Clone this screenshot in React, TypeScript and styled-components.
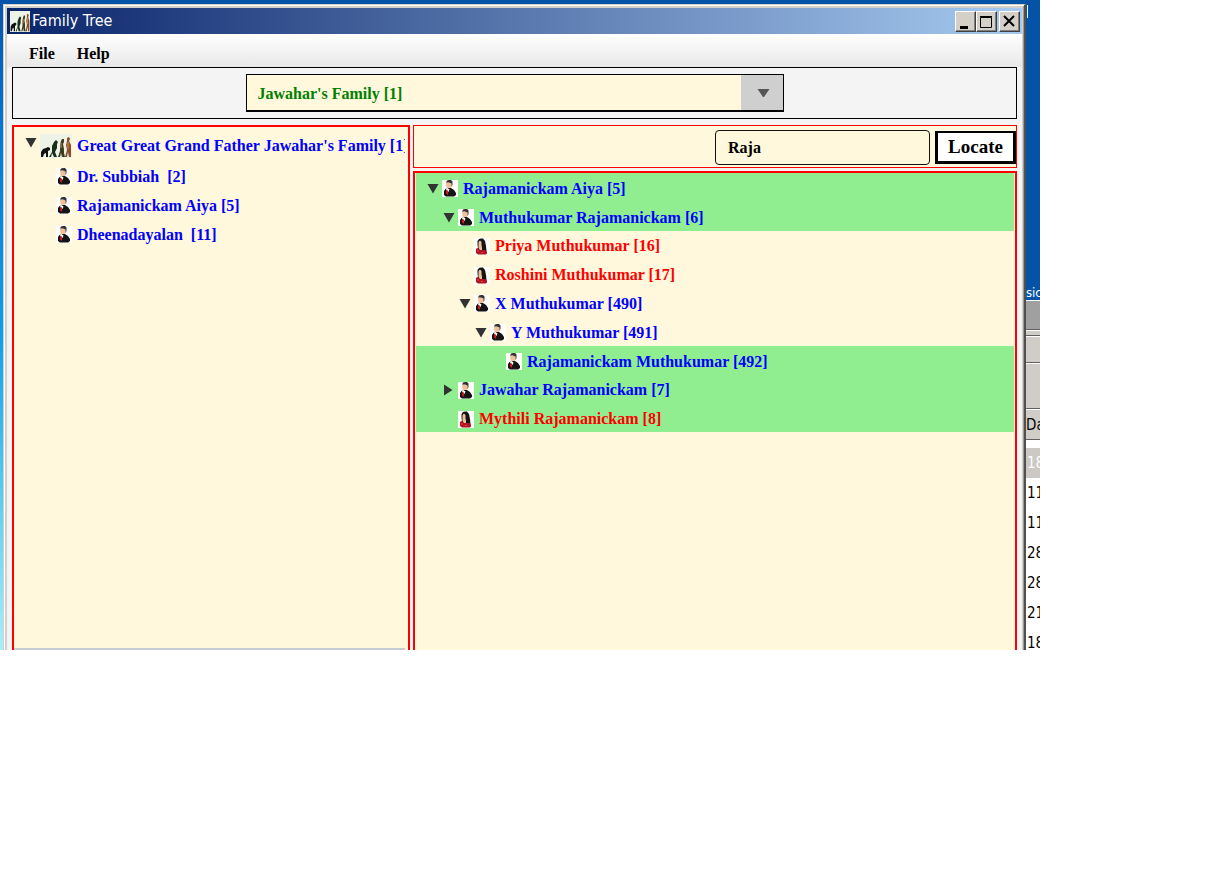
import React, { useState } from "react";
import styled, { createGlobalStyle } from "styled-components";

const serif = '"Liberation Serif", "Times New Roman", serif';
const sans = '"DejaVu Sans Condensed", Tahoma, sans-serif';
const cream = "#fff8dc";
const match = "#90ee90";

const GlobalStyle = createGlobalStyle`
  * { box-sizing: border-box; }
  body { margin: 0; background: #fff; font-family: ${serif}; }
  button, input, select { margin: 0; font-family: inherit; }
  svg { flex: none; }
`;

const Page = styled.div`
  min-height: 100vh;
  display: flex;
  padding: 0 166px 220px 0;
`;

const Desktop = styled.main`
  flex: 1;
  min-width: 0;
  display: flex;
  overflow: hidden;
  padding: 4px 0 0 3px;
  background: linear-gradient(90deg, transparent 3px, #0553a6 3px),
    linear-gradient(180deg, #0553b0, #0078d8 20%, #0aa0f0 52%, #5cd0f4 78%, #a4f0ff);
`;

const Window = styled.section`
  flex: 1;
  min-width: 0;
  display: flex;
  flex-direction: column;
  padding: 3px 2px 0 3px;
  border: 1px solid #d4d0c8;
  border-right: 2px solid #505050;
  border-bottom: 0;
  background: #d4d0c8;
  box-shadow: inset 1px 1px #fff, inset -1px 0 #9a9a9a;
`;

const TitleBar = styled.header`
  height: 26px;
  display: flex;
  align-items: center;
  padding: 0 2px 0 3px;
  background: linear-gradient(90deg, #0a246a, #a6caf0);
`;

const Title = styled.h1`
  flex: 1;
  margin: 0 0 0 2px;
  color: #fff;
  font: 400 16px/20px ${sans};
`;

const Caption = styled.button<{ $apart?: boolean }>`
  width: 21px;
  height: 21px;
  margin-left: ${(p) => (p.$apart ? 2 : 0)}px;
  padding: 0;
  display: grid;
  place-items: center;
  border: 1px solid;
  border-color: #fff #404040 #404040 #fff;
  background: #d4d0c8;
  box-shadow: inset -1px -1px #808080;
`;

const Client = styled.div`
  flex: 1;
  min-height: 0;
  display: flex;
  flex-direction: column;
  background: #f4f4f4;
`;

const MenuBar = styled.nav`
  height: 33px;
  display: flex;
  align-items: center;
  gap: 22px;
  padding: 7px 22px 0;
  background: linear-gradient(#fff, #e8e8e8);
`;

const MenuItem = styled.button`
  padding: 0;
  border: 0;
  background: none;
  color: #000;
  font-size: 16px;
  line-height: 20px;
  font-weight: 700;
`;

const Toolbar = styled.div`
  height: 52px;
  margin: 0 5px;
  display: flex;
  align-items: center;
  justify-content: center;
  border: 1px solid #000;
  background: #f4f4f4;
`;

const FamilyPicker = styled.label`
  width: 538px;
  height: 38px;
  display: grid;
  grid-template-columns: 1fr 42px;
  border: 1px solid #000;
  border-bottom-width: 2px;
  background: ${cream};
`;

const FamilySelect = styled.select`
  grid-area: 1 / 1 / 2 / 3;
  width: 100%;
  appearance: none;
  padding: 2px 11px 0;
  border: 0;
  background: none;
  color: #008000;
  font-size: 16px;
  line-height: 24px;
  font-weight: 700;
`;

const PickerArrow = styled.span`
  grid-area: 1 / 2;
  display: grid;
  place-items: center;
  padding-left: 3px;
  background: #cfcfcf;
  pointer-events: none;
`;

const Panes = styled.div`
  flex: 1;
  min-height: 0;
  display: grid;
  grid-template-columns: 398px minmax(0, 1fr);
  gap: 3px;
  margin: 6px 5px 0;
`;

const TreePane = styled.section`
  flex: 1;
  min-height: 0;
  overflow: hidden;
  padding: 0 1px;
  border: 2px solid #f00;
  border-bottom: 0;
  background: ${cream};
`;

const FamilyPane = styled(TreePane)`
  display: flex;
  flex-direction: column;
  justify-content: space-between;
  padding: 0 3px 0 0;
`;

const ScrollEdge = styled.div`
  height: 2px;
  background: #c8ccd4;
`;

const SearchColumn = styled.div`
  min-width: 0;
  display: flex;
  flex-direction: column;
  gap: 3px;
`;

const SearchBar = styled.form`
  height: 43px;
  display: flex;
  align-items: center;
  justify-content: flex-end;
  gap: 5px;
  padding-top: 2px;
  border: 1px solid #f00;
  background: ${cream};
`;

const SearchInput = styled.input`
  width: 215px;
  height: 35px;
  padding: 0 12px;
  border: 1px solid #111;
  border-radius: 4px;
  background: ${cream};
  color: #000;
  font-size: 16px;
  font-weight: 700;
`;

const LocateButton = styled.button`
  width: 81px;
  height: 33px;
  padding: 0;
  border: 3px solid #000;
  border-top-width: 2px;
  background: #fff;
  color: #000;
  font-size: 19px;
  line-height: 24px;
  font-weight: 700;
`;

const Tree = styled.ul`
  margin: 0;
  padding: 0;
  overflow: hidden;
  list-style: none;
`;

const ResultTree = styled(Tree)`
  height: 259px;
  display: grid;
  grid-auto-rows: 1fr;
`;

const Row = styled.li<{ $depth: number; $hit?: boolean; $female?: boolean; $root?: boolean }>`
  height: ${(p) => (p.$root ? 33 : 29)}px;
  display: flex;
  align-items: center;
  gap: 2px;
  padding-left: ${(p) => 10 + p.$depth * 16}px;
  padding-top: 4px;
  background: ${(p) => (p.$hit ? match : "transparent")};
  color: ${(p) => (p.$female ? "#f00" : "#00f")};
  font-size: 16px;
  line-height: 24px;
  font-weight: 700;
  white-space: pre;

  ${ResultTree} & {
    height: auto;
    padding-top: 3px;
  }
`;

const Name = styled.span`
  margin-left: 3px;
`;

const Toggle = styled.button<{ $root?: boolean }>`
  width: 14px;
  height: ${(p) => (p.$root ? 24 : 16)}px;
  align-self: ${(p) => (p.$root ? "flex-start" : "center")};
  flex: none;
  padding: 0;
  border: 0;
  background: none;
  display: grid;
  place-items: center;
`;

const Spacer = styled.span`
  width: 14px;
  flex: none;
`;

const Background = styled.aside`
  width: 14px;
  flex: none;
  overflow: hidden;
  color: #000;
  font: 400 15px/20px ${sans};
  white-space: nowrap;
`;

const Caret = styled.div`
  width: 1px;
  height: 13px;
  margin: 1px 0 266px 1px;
  background: #fff;
`;

const DesktopLabel = styled.div`
  height: 16px;
  color: #fff;
  font: 400 13px/18px ${sans};
`;

const Strip = styled.div<{ $h: number; $bg: string }>`
  height: ${(p) => p.$h}px;
  border-top: 1px solid #fff;
  border-bottom: 1px solid #606060;
  background: ${(p) => p.$bg};
  line-height: ${(p) => p.$h - 1}px;
`;

const Cells = styled.div`
  height: 210px;
  padding-top: 8px;
  overflow: hidden;
  background: #fff;
`;

const Cell = styled.div<{ $selected?: boolean }>`
  height: 30px;
  padding-left: 1px;
  background: ${(p) => (p.$selected ? "#ccc8c4" : "#fff")};
  color: ${(p) => (p.$selected ? "#fff" : "#000")};
  line-height: 30px;
`;

const Triangle = ({ open = true }: { open?: boolean }) => (
  <svg width="12" height="12" viewBox="0 0 12 12" aria-hidden="true">
    <path d={open ? "M0.500 1h11L6 10.500Z" : "M1 0.500v11L9.500 6Z"} fill="#333" />
  </svg>
);

const DropArrow = () => (
  <svg width="13" height="8" viewBox="0 0 13 8" aria-hidden="true">
    <path d="M0.500 0h12L7 8H6Z" fill="#555" />
  </svg>
);

const EvolutionIcon = ({ w, h }: { w: number; h: number }) => (
  <svg width={w} height={h} viewBox="0 0 32 24" preserveAspectRatio="none" aria-hidden="true">
    <path fill="#eef3e8" d="M0 0h32v24H0z" />
    <path fill="#10130f" d="M1 23v-5l2-3 3-1 2-1 2 1v2l-2 1v6H6v-4l-2 1-1 3z" />
    <path fill="#16301a" d="M9 23l3-5 0-6 2-4 2-2 2 2-1 2v4l-2 4 2 5h-3l-2-4-1 4z" />
    <path fill="#3c3c20" d="M18 23l2-6v-6l1-4 1-2h2v3l-1 2 1 5v4l1 4h-3l-1-4-1 4z" />
    <path fill="#8a4c2a" d="M25 23l2-7-1-5 1-4v-3l2-1 1 2-1 2 2 4v6l0 6h-2l-1-5-1 5z" />
    <path stroke="#d9935d" fill="none" d="M28 8v7M21 9v5" />
  </svg>
);

const ManIcon = () => (
  <svg width="16" height="17" viewBox="0 0 16 17" aria-hidden="true">
    <path fill="#fffefb" d="M0 0h16v17H0z" />
    <path fill="#f2bf98" d="M4 2.500h5l.5 4L8 9H5.500L4.500 7z" />
    <path fill="#333" d="M4 2.500l1-2L7 0h2l1.500 1.500v3.500l-1 2V3.500L7 2.500z" />
    <path fill="#141414" d="M2 15v-4l1.500-2L6 8h3l3 2 2 3v2l-2 1.500H4z" />
    <path fill="#fff" d="M4 9l1.500-1L7.500 9.500 6.500 12 5 11z" />
    <path fill="#d32020" d="M4.500 10h1l.8 3-1 2L4 13z" />
  </svg>
);

const WomanIcon = () => (
  <svg width="16" height="17" viewBox="0 0 16 17" aria-hidden="true">
    <path fill="#fffefb" d="M0 0h16v17H0z" />
    <path fill="#151515" d="M3.500 6V3L5 1l2-.5h2L11 3l1 5 .5 5-2 1L4 11z" />
    <path fill="#f2bf98" d="M4.500 4L6 2.500 7.500 4v3l.5 3v2H6l-1.500-2z" />
    <path fill="#b01424" d="M2 15v-4l1.500-1L6 12h5l2 1.500v2L12 16.500H4z" />
    <path fill="#e8402c" d="M3.500 12h1v2h-1zM7 14h2v1H7z" />
  </svg>
);

const people = [
  { name: "Rajamanickam Aiya [5]", depth: 0, open: true, hit: true },
  { name: "Muthukumar Rajamanickam [6]", depth: 1, open: true, hit: true },
  { name: "Priya Muthukumar [16]", depth: 2, female: true },
  { name: "Roshini Muthukumar [17]", depth: 2, female: true },
  { name: "X Muthukumar [490]", depth: 2, open: true },
  { name: "Y Muthukumar [491]", depth: 3, open: true },
  { name: "Rajamanickam Muthukumar [492]", depth: 4, hit: true },
  { name: "Jawahar Rajamanickam [7]", depth: 1, open: false, hit: true },
  { name: "Mythili Rajamanickam [8]", depth: 1, female: true, hit: true },
];

const branches = ["Dr. Subbiah  [2]", "Rajamanickam Aiya [5]", "Dheenadayalan  [11]"];

export default function App() {
  const [query, setQuery] = useState("Raja");

  return (
    <Page>
      <GlobalStyle />
      <Desktop>
        <Window>
          <TitleBar>
            <EvolutionIcon w={20} h={21} />
            <Title>Family Tree</Title>
            <Caption aria-label="Minimize">
              <svg width="17" height="17"><path d="M3 13h8v3H3z" /></svg>
            </Caption>
            <Caption aria-label="Maximize">
              <svg width="17" height="17"><path d="M2.500 4.500h11v10h-11zM2 3.500h12" fill="none" stroke="#000" /></svg>
            </Caption>
            <Caption aria-label="Close" $apart>
              <svg width="17" height="17"><path d="M3 3l10 10M13 3L3 13" stroke="#000" strokeWidth="2" /></svg>
            </Caption>
          </TitleBar>
          <Client>
            <MenuBar>
              <MenuItem>File</MenuItem>
              <MenuItem>Help</MenuItem>
            </MenuBar>
            <Toolbar>
              <FamilyPicker>
                <FamilySelect aria-label="Family">
                  <option>Jawahar's Family [1]</option>
                </FamilySelect>
                <PickerArrow><DropArrow /></PickerArrow>
              </FamilyPicker>
            </Toolbar>
            <Panes>
              <FamilyPane>
                <Tree role="tree">
                  <Row $depth={0} $root role="treeitem">
                    <Toggle $root aria-label="Collapse"><Triangle /></Toggle>
                    <EvolutionIcon w={32} h={24} />
                    <Name>Great Great Grand Father Jawahar's Family [1]</Name>
                  </Row>
                  {branches.map((name) => (
                    <Row key={name} $depth={1} role="treeitem">
                      <Spacer />
                      <ManIcon />
                      <Name>{name}</Name>
                    </Row>
                  ))}
                </Tree>
                <ScrollEdge />
              </FamilyPane>
              <SearchColumn>
                <SearchBar onSubmit={(e) => e.preventDefault()}>
                  <SearchInput aria-label="Name" value={query} onChange={(e) => setQuery(e.target.value)} />
                  <LocateButton>Locate</LocateButton>
                </SearchBar>
                <TreePane>
                  <ResultTree role="tree">
                    {people.map((p) => (
                      <Row key={p.name} $depth={p.depth} $hit={p.hit} $female={p.female} role="treeitem">
                        {p.open === undefined ? (
                          <Spacer />
                        ) : (
                          <Toggle aria-label={p.open ? "Collapse" : "Expand"}><Triangle open={p.open} /></Toggle>
                        )}
                        {p.female ? <WomanIcon /> : <ManIcon />}
                        <Name>{p.name}</Name>
                      </Row>
                    ))}
                  </ResultTree>
                </TreePane>
              </SearchColumn>
            </Panes>
          </Client>
        </Window>
        <Background>
          <Caret />
          <DesktopLabel>sic</DesktopLabel>
          <Strip $h={30} $bg="#a0a0a0" />
          <Strip $h={6} $bg="#d0ccc8" />
          <Strip $h={27} $bg="#d0ccc8" />
          <Strip $h={46} $bg="#d0ccc8" />
          <Strip $h={31} $bg="#d0ccc8">Da</Strip>
          <Cells>
            <Cell $selected>18</Cell>
            {["11", "11", "28", "28", "21", "18"].map((v, i) => (
              <Cell key={i}>{v}</Cell>
            ))}
          </Cells>
        </Background>
      </Desktop>
    </Page>
  );
}
